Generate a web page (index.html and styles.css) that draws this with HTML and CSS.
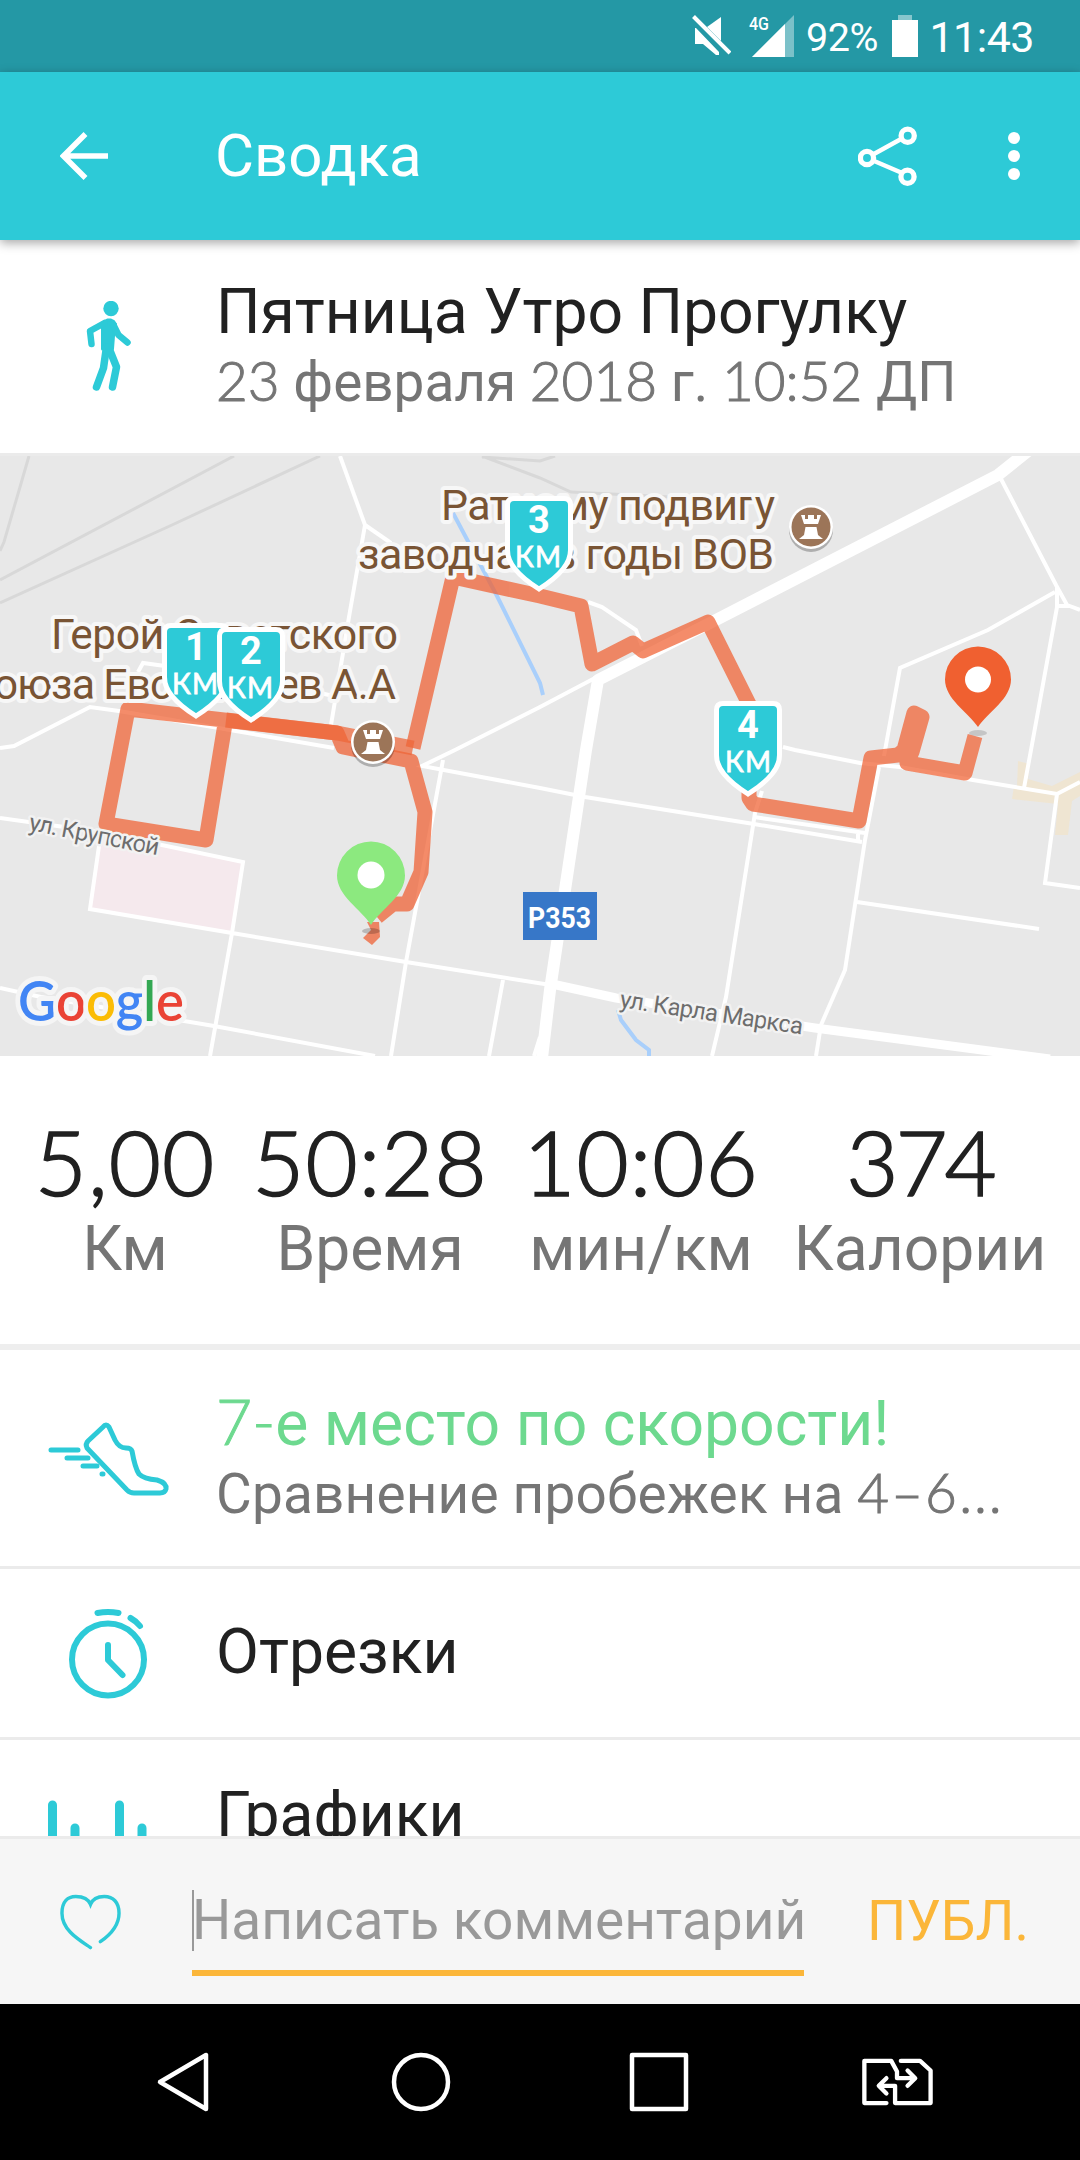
FILE: index.html
```html
<!DOCTYPE html>
<html lang="ru">
<head>
  <meta charset="UTF-8">
  <title>Сводка</title>
  <link rel="stylesheet" href="styles.css">
</head>
<body>

  <!-- Status bar -->
  <div class="status-bar">
    <svg class="mute-icon" width="40" height="42" viewBox="0 0 40 42">
      <path d="M4 13v16h8l13 11h3v-3L5 13z" fill="#fff"/>
      <path d="M16 12L30 2v24z" fill="#fff"/>
      <path d="M2.500 1.500L39 38" stroke="#fff" stroke-width="4"/>
    </svg>
    <svg class="signal-icon" width="46" height="42" viewBox="0 0 46 42">
      <path d="M4 42H46V0z" fill="#fff" opacity="0.4"/>
      <path d="M4 42H37V9z" fill="#fff"/>
      <text x="1" y="15" textLength="20" lengthAdjust="spacingAndGlyphs" class="net">4G</text>
    </svg>
    <span class="percent">92%</span>
    <svg class="battery-icon" width="26" height="42" viewBox="0 0 26 42">
      <path d="M6 0h14v5H6z" fill="#fff" opacity="0.45"/>
      <path d="M0 5h26v37H0z" fill="#fff"/>
    </svg>
    <span class="clock">11:43</span>
  </div>

  <!-- App bar -->
  <div class="app-bar">
    <svg class="back-icon" width="48" height="48" viewBox="0 0 48 48" fill="none" stroke="#fff" stroke-width="5.500">
      <path d="M48 24H4M25.500 2L3.500 24l22 22"/>
    </svg>
    <h1>Сводка</h1>
    <svg class="share-icon" width="60" height="60" viewBox="0 0 60 60" fill="none" stroke="#fff">
      <path d="M15 28.500L44 12.500M15 34.500L43 46.500" stroke-width="4.500"/>
      <g stroke-width="5.300">
        <circle cx="49.700" cy="9.700" r="6.600"/>
        <circle cx="9" cy="32" r="6.600"/>
        <circle cx="49.500" cy="50.700" r="6.600"/>
      </g>
    </svg>
    <svg class="more-icon" width="12" height="48" viewBox="0 0 12 48" fill="#fff">
      <circle cx="6" cy="6" r="6"/>
      <circle cx="6" cy="24" r="6"/>
      <circle cx="6" cy="42" r="6"/>
    </svg>
  </div>

  <!-- Scrolling content -->
  <div class="content">

    <div class="row summary">
      <div class="row-icon">
        <svg width="48" height="92" viewBox="-1.500 0 48 92" fill="none" stroke="#2dcad7" stroke-linecap="round" stroke-linejoin="round">
          <circle cx="25.500" cy="7.500" r="7.700" fill="#2dcad7" stroke="none"/>
          <path d="M17 22L22 19H25.500L30 23L28 35L27 48H17z" fill="#2dcad7" stroke-width="3"/>
          <path d="M19 22L4.500 30L6 43" stroke-width="6.500"/>
          <path d="M27 22L33 34L42 41.500" stroke-width="6.500"/>
          <path d="M21 46L18 67L11 86" stroke-width="7.500"/>
          <path d="M23 46L31 66L27 86" stroke-width="7.500"/>
        </svg>
      </div>
      <div class="row-text">
        <div class="title activity">Пятница Утро Прогулку</div>
        <div class="sub date"><span class="num">23</span> февраля <span class="num">2018</span> г. <span class="num">10:52</span> ДП</div>
      </div>
    </div>

    <!-- Map -->
    <svg class="map" width="1080" height="600" viewBox="0 0 1080 600">
      <defs>
        <g id="shield">
          <path d="M9 2.500H59Q65.500 2.500 65.500 9V54Q65.500 64 58 73Q50 83 34 93Q18 83 10 73Q2.500 64 2.500 54V9Q2.500 2.500 9 2.500z" fill="#2dcad7" stroke="#fff" stroke-width="5"/>
        </g>
        <g id="rook">
          <circle cx="0" cy="3" r="22" fill="#000" opacity="0.25"/>
          <circle r="22" fill="#fff"/>
          <circle r="19.500" fill="#9c7558"/>
          <path d="M-10-12h4v4h3v-4h6v4h3v-4h4L7-3H-7z" fill="#fff"/>
          <path d="M-5.500 0h11L7 8L12 12H-12L-7 8z" fill="#fff"/>
        </g>
      </defs>
      <rect width="1080" height="600" fill="#e8e8e8"/>

      <!-- areas -->
      <path d="M100 376L243 406L232 477L90 453z" fill="#f5e9ed"/>
      <path d="M1018 305L1030 308L1028 323L1052 330L1080 316V340L1072 345L1068 379H1055L1058 348L1012 343L1014 330L1017 330z" fill="#efe5d2"/>

      <!-- rail and water -->
      <g fill="none" stroke="#d8d8d8" stroke-width="3">
        <path d="M29 0L4 86L0 95"/>
        <path d="M234 0L0 124"/>
        <path d="M320 0L172 69L0 147"/>
        <path d="M482 0L540 22L571 36L671 41M482 1L540 5L555 0"/>
      </g>
      <g fill="none" stroke="#a9cffb" stroke-width="4">
        <path d="M453 57L497 140L540 227L543 239"/>
        <path d="M618 554L621 564L636 584L649 594V600"/>
      </g>

      <!-- streets -->
      <g fill="none" stroke="#fff" stroke-width="4">
        <path d="M340 0L365 69L349 161L331 269M365 69L391 87"/>
        <path d="M0 292L14 290L90 251L119 255L172 264L334 292M138 216L143 207L165 210M320 237L338 241"/>
        <path d="M595 222L540 251L455 294L422 310L540 332L585 341L754 368L862 386"/>
        <path d="M1000 21L1056 129L1067 149L1080 154M1055 136L988 174L900 212L884 300M1057 130V151L1031 294L1024 332M1057 150H1069"/>
        <path d="M588 146L602 151L636 174L642 190"/>
        <path d="M783 291L795 294L860 307L900 311L967 323L1057 338L1080 326M1057 338L1045 427L1080 432"/>
        <path d="M754 361L865 377M858 377V385"/>
        <path d="M879 311L865 384L845 514L821 569L816 600"/>
        <path d="M762 335L755 357L726 541L712 600M857 446L1039 473"/>
        <path d="M443 304L406 506L391 600M503 524L489 600M540 581L534 600"/>
        <path d="M0 362L100 376L243 406L232 477L210 600M101 376L90 453L232 477L406 506L557 530"/>
        <path d="M0 532L41 541L214 570L375 600"/>
      </g>
      <g fill="none" stroke="#fff">
        <path d="M1028 -5L998 19L712 166L598 224L586 294L550 534L542 602" stroke-width="12" stroke-linejoin="round"/>
        <path d="M552 528L616 542L815 572L1050 603" stroke-width="9"/>
      </g>

      <!-- walked route -->
      <g fill="none" stroke="#f05f30" stroke-width="15" stroke-linejoin="round" opacity="0.72">
        <path d="M377 461L393 448H407L421 416L425 356L411 305L343 291L337 277L224 264L128 253L106 368L206 384L225 268"/>
        <path d="M363 482L371 474L367 466H379L380 481L372 489z" fill="#f05f30" stroke="none"/>
        <path d="M413 292L453 121L540 140L581 150L592 208L633 187L643 195L708 166L749 248V342L753 348L859 365L871 302L898 299L904 294L914 257L922 261L912 296L907 307L965 317L975 280"/>
      </g>
      <path d="M226 264L337 277L413 292" fill="none" stroke="#ef6537" stroke-width="15" stroke-linejoin="round" opacity="0.72"/>

      <!-- labels -->
      <g class="poi-label">
        <text x="441" y="63.500" textLength="334">Ратному подвигу</text>
        <text x="358" y="113" textLength="416">заводчан в годы ВОВ</text>
        <text x="51" y="193" textLength="347">Герой Советского</text>
        <text x="-33" y="243" textLength="429">Союза Евстигнеев А.А</text>
      </g>
      <g class="street-label">
        <text transform="translate(28 374) rotate(11)" textLength="132">ул. Крупской</text>
        <text transform="translate(619 551) rotate(8.500)" textLength="185">ул. Карла Маркса</text>
      </g>
      <rect x="523" y="436" width="74" height="48" fill="#3777c8"/>
      <text class="road-number" x="528" y="472" textLength="63" lengthAdjust="spacingAndGlyphs">P353</text>
      <text class="google" x="18" y="565" textLength="166" lengthAdjust="spacingAndGlyphs"><tspan fill="#4285f4">G</tspan><tspan fill="#ea4335">o</tspan><tspan fill="#fbbc05">o</tspan><tspan fill="#4285f4">g</tspan><tspan fill="#34a853">l</tspan><tspan fill="#ea4335">e</tspan></text>

      <use href="#rook" x="811" y="71"/>
      <use href="#rook" x="373" y="286"/>

      <!-- kilometre marks -->
      <g class="km">
        <use href="#shield" x="162" y="167"/>
        <text class="km-num" x="196" y="204">1</text>
        <text class="km-unit" x="172" y="238" textLength="46">КМ</text>
        <use href="#shield" x="217" y="171"/>
        <text class="km-num" x="251" y="208">2</text>
        <text class="km-unit" x="227" y="242" textLength="46">КМ</text>
        <use href="#shield" x="505" y="40"/>
        <text class="km-num" x="539" y="77">3</text>
        <text class="km-unit" x="515" y="111" textLength="46">КМ</text>
        <use href="#shield" x="714" y="245"/>
        <text class="km-num" x="748" y="282">4</text>
        <text class="km-unit" x="725" y="316" textLength="46">КМ</text>
      </g>

      <!-- start and finish pins -->
      <ellipse cx="371" cy="475" rx="9" ry="3" opacity="0.2"/>
      <path d="M371 469C361 453 337 440 337 419.500A34 34 0 0 1 405 419.500C405 440 381 453 371 469z" fill="#8ce97f"/>
      <circle cx="371" cy="419" r="13.500" fill="#fff"/>
      <ellipse cx="978" cy="277" rx="9" ry="3" opacity="0.15"/>
      <path d="M978 271C968 256 945 243 945 223.500A33 33 0 0 1 1011 223.500C1011 243 988 256 978 271z" fill="#f06030"/>
      <circle cx="978" cy="223.500" r="13" fill="#fff"/>
    </svg>

    <!-- Totals -->
    <div class="stats">
      <div class="stat">
        <div class="value">5,00</div>
        <div class="label">Км</div>
      </div>
      <div class="stat">
        <div class="value">50:28</div>
        <div class="label">Время</div>
      </div>
      <div class="stat">
        <div class="value">10:06</div>
        <div class="label">мин/км</div>
      </div>
      <div class="stat">
        <div class="value calories">374</div>
        <div class="label">Калории</div>
      </div>
    </div>

    <div class="row place">
      <div class="row-icon">
        <svg width="124" height="76" viewBox="-1 0 124 76" fill="none" stroke="#2dcad7" stroke-linecap="round" stroke-linejoin="round">
          <path d="M56 7Q59 3 62 7L68 20Q72 28 79 28Q84 28 85 31Q88 48 92 54Q97 59 110 60Q120 63 119 69Q118 73 113 73H87Q83 73 80 70L40 28Q38 24 41 21z" stroke-width="5"/>
          <path d="M4 30H31M20 38H41M36 46H50M55 54H56" stroke-width="5"/>
        </svg>
      </div>
      <div class="row-text">
        <div class="title rank"><span class="num">7-</span>е место по скорости!</div>
        <div class="sub compare">Сравнение пробежек на <span class="num">4–6</span>...</div>
      </div>
    </div>

    <div class="row laps">
      <div class="row-icon">
        <svg width="80" height="92" viewBox="-1 0 80 92" fill="none" stroke="#2dcad7" stroke-width="6" stroke-linecap="round" stroke-linejoin="round">
          <circle cx="39" cy="52.500" r="36"/>
          <path d="M28.500 6Q39 4 49.500 6M61.500 11Q67 14 71 19M39 38V53L53.500 68"/>
        </svg>
      </div>
      <div class="title">Отрезки</div>
    </div>

    <div class="row charts">
      <div class="row-icon">
        <svg width="128" height="60" viewBox="-1 0 128 60" stroke="#2dcad7" stroke-width="9" stroke-linecap="round">
          <path d="M7.500 20V70M30 43V70M74.500 20V70M97 43V70"/>
        </svg>
      </div>
      <div class="title">Графики</div>
    </div>
  </div>

  <!-- Comment bar -->
  <div class="comment-bar">
    <svg class="heart-icon" width="61" height="58" viewBox="0 0 62 58" fill="none" stroke="#2dcad7" stroke-width="3.500" stroke-linecap="round">
      <path d="M31 55C21 48 2 38 2 20C2 8 8 3 16 3C24 3 29 6 31 11C33 6 38 3 45 3C54 3 60 9 60 20C60 32 51 42 41 49"/>
    </svg>
    <div class="comment-field">Написать комментарий</div>
    <div class="publish">ПУБЛ.</div>
  </div>

  <!-- Navigation bar -->
  <div class="nav-bar">
    <svg class="nav-back" width="54" height="62" viewBox="0 0 54 62"><path d="M4 31L50 4V58z"/></svg>
    <svg class="nav-home" width="62" height="62" viewBox="0 0 62 62"><circle cx="31" cy="31" r="27"/></svg>
    <svg class="nav-recent" width="62" height="62" viewBox="0 0 62 62"><path d="M4 4H58V58H4z"/></svg>
    <svg class="nav-sim" width="74" height="48" viewBox="0 0 76 50">
      <path d="M27 47H4V3H32L38 14V21H56M49 13L57 21L49 29"/>
      <path d="M42 3H62L73 13V47H36V29H20M27 21L19 29L27 37"/>
    </svg>
  </div>

</body>
</html>
```
FILE: styles.css
```css
body {
  margin: 0;
  width: 1080px;
  height: 2160px;
  display: flex;
  flex-direction: column;
  overflow: hidden;
  font-family: Roboto, sans-serif;
  background-color: #fff;
}

svg {
  display: block;
  flex-shrink: 0;
}

.num {
  font-family: Lato, sans-serif;
  font-weight: 300;
  line-height: 1;
  -webkit-text-stroke: 1px currentColor;
}

/* Status bar */
.status-bar {
  height: 72px;
  box-sizing: border-box;
  padding: 15px 46px 0 691px;
  display: flex;
  align-items: flex-start;
  flex-shrink: 0;
  background-color: #2498a5;
  color: #fff;
}

.signal-icon {
  margin-left: 17px;
  overflow: visible;
}

.net {
  font-size: 18px;
  font-weight: 500;
  fill: #fff;
}

.percent {
  width: 74px;
  margin-left: 12px;
  font-size: 39.5px;
  line-height: 46px;
  letter-spacing: -0.5px;
}

.battery-icon {
  margin-left: 13px;
}

.clock {
  margin-left: 11px;
  font-size: 43px;
  line-height: 45px;
  letter-spacing: -0.5px;
}

/* App bar */
.app-bar {
  height: 168px;
  display: flex;
  align-items: center;
  flex-shrink: 0;
  position: relative;
  z-index: 1;
  background-color: #2dcad7;
  box-shadow: 0 3px 10px rgba(0, 0, 0, 0.35);
  color: #fff;
}

.back-icon {
  margin-left: 60px;
}

h1 {
  flex: 1;
  margin: 0 0 1px 107px;
  font-size: 60px;
  font-weight: 400;
}

.share-icon {
  margin-right: 90px;
}

.more-icon {
  margin-right: 60px;
}

/* Content */
.content {
  height: 1596px;
  overflow: hidden;
  flex-shrink: 0;
}

.row {
  display: flex;
  align-items: center;
  box-sizing: border-box;
  border-bottom: 3px solid #ebebeb;
}

.row-icon {
  width: 216px;
  display: flex;
  justify-content: center;
  flex-shrink: 0;
}

.title {
  font-size: 62.4px;
  line-height: 71px;
  color: #212121;
  white-space: nowrap;
}

.sub {
  font-size: 54.9px;
  line-height: 71px;
  color: #757575;
  white-space: nowrap;
}

.summary {
  height: 216px;
}

.place {
  height: 219px;
}

.place .row-text {
  margin-top: 2px;
}

.compare {
  letter-spacing: 0.2px;
}

.compare .num {
  letter-spacing: 2px;
}

.laps {
  height: 171px;
}

.laps .title {
  margin-bottom: 3px;
}

.charts {
  height: 149px;
  border-bottom: none;
}

.rank {
  color: #6dd98f;
}

.map {
  width: 1080px;
  height: 600px;
}

.poi-label {
  font-size: 43px;
  fill: #795434;
  stroke: #f7f7f7;
  stroke-width: 8px;
  stroke-linejoin: round;
  paint-order: stroke;
}

.street-label {
  font-size: 24px;
  fill: #6d6d6d;
  stroke: #f2f2f2;
  stroke-width: 5px;
  stroke-linejoin: round;
  paint-order: stroke;
}

.road-number {
  font-size: 30px;
  font-weight: 700;
  fill: #fff;
}

.google {
  font-family: Lato, sans-serif;
  font-size: 55px;
  font-weight: 600;
  stroke: #f5f5f5;
  stroke-width: 10px;
  stroke-linejoin: round;
  paint-order: stroke;
}

.km {
  fill: #fff;
}

.km-num {
  font-size: 38px;
  font-weight: 700;
  text-anchor: middle;
}

.km-unit {
  font-family: Lato, sans-serif;
  font-size: 28px;
  stroke: #fff;
  stroke-width: 0.8px;
}

/* Totals */
.stats {
  height: 294px;
  box-sizing: border-box;
  padding-top: 56px;
  display: grid;
  grid-template-columns: 250px 240px 302px 256px;
  border-bottom: 6px solid #eee;
  text-align: center;
}

.stat {
  display: flex;
  flex-direction: column;
  align-items: center;
  white-space: nowrap;
}

.value {
  font-family: Lato, sans-serif;
  font-weight: 300;
  font-size: 90px;
  line-height: 99px;
  color: #212121;
  letter-spacing: 1px;
  -webkit-text-stroke: 1.7px #212121;
}

.calories {
  letter-spacing: -3px;
}

.label {
  font-size: 62.3px;
  line-height: 76px;
  color: #757575;
}

/* Comment bar */
.comment-bar {
  height: 168px;
  box-sizing: border-box;
  display: flex;
  align-items: flex-start;
  flex-shrink: 0;
  border-top: 3px solid #ebebeb;
  background-color: #f6f6f6;
}

.heart-icon {
  margin: 54px 0 0 60px;
}

.comment-field {
  width: 612px;
  box-sizing: border-box;
  height: 137px;
  margin-left: 71px;
  padding-top: 44px;
  border-bottom: 6px solid #fbb639;
  font-size: 55px;
  line-height: 75px;
  color: #999;
  white-space: nowrap;
  background: linear-gradient(#999, #999) 0 51px / 2px 61px no-repeat;
}

.publish {
  margin: 44px 0 0 63px;
  font-size: 55px;
  line-height: 76px;
  color: #fbb639;
}

/* Navigation bar */
.nav-bar {
  height: 156px;
  display: flex;
  align-items: center;
  flex-shrink: 0;
  background-color: #000;
}

.nav-bar svg {
  fill: none;
  stroke: #fff;
  stroke-width: 4.5px;
  stroke-linejoin: round;
  stroke-linecap: round;
}

.nav-back {
  margin-left: 156px;
}

.nav-home {
  margin-left: 180px;
}

.nav-recent {
  margin-left: 176px;
}

.nav-sim {
  margin-left: 170px;
}
```
